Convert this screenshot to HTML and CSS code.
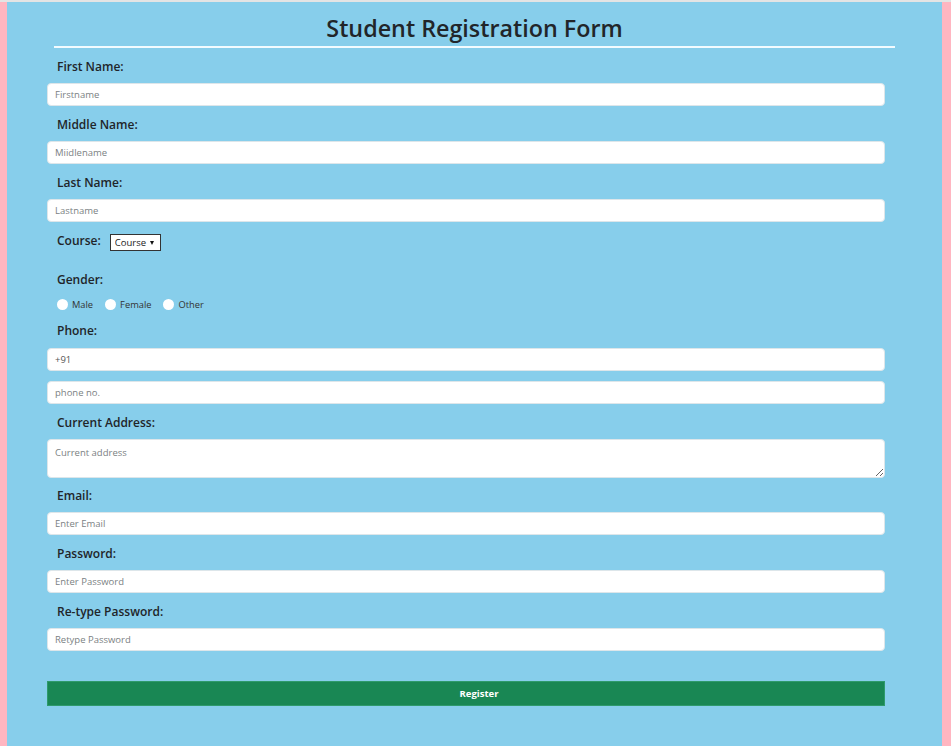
FILE: index.html
```html
<!DOCTYPE html>
<html>
<head>
<meta charset="utf-8">
<title>Student Registration Form</title>
<link rel="stylesheet" href="styles.css">
</head>
<body>
<div class="page">
  <h1 class="title">Student Registration Form</h1>
  <div class="rule"></div>
  <form class="form">
    <label class="lbl">First Name:</label>
    <input class="field" type="text" placeholder="Firstname">
    <label class="lbl">Middle Name:</label>
    <input class="field" type="text" placeholder="Miidlename">
    <label class="lbl">Last Name:</label>
    <input class="field" type="text" placeholder="Lastname">
    <div class="course-row">
      <label class="lbl inline">Course:</label>
      <span class="select-wrap">
        <select class="select"><option>Course</option></select>
        <span class="caret"></span>
      </span>
    </div>
    <label class="lbl gender">Gender:</label>
    <div class="radios">
      <label class="radio"><input type="radio" name="g"><span>Male</span></label>
      <label class="radio"><input type="radio" name="g"><span>Female</span></label>
      <label class="radio"><input type="radio" name="g"><span>Other</span></label>
    </div>
    <label class="lbl phone">Phone:</label>
    <input class="field code" type="text" value="+91">
    <input class="field next" type="text" placeholder="phone no.">
    <label class="lbl">Current Address:</label>
    <textarea class="field area" placeholder="Current address"></textarea>
    <label class="lbl">Email:</label>
    <input class="field" type="email" placeholder="Enter Email">
    <label class="lbl">Password:</label>
    <input class="field" type="password" placeholder="Enter Password">
    <label class="lbl">Re-type Password:</label>
    <input class="field" type="password" placeholder="Retype Password">
    <button class="btn" type="button">Register</button>
  </form>
</div>
</body>
</html>
```
FILE: styles.css
```css
html, body {
  margin: 0;
  padding: 0;
}
body {
  background: #ffb6c1;
  border-top: 2px solid #e4e4e4;
  font-family: "Open Sans", "Noto Sans", sans-serif;
  color: #212529;
  min-height: 744px;
  box-sizing: border-box;
}
.page {
  background: #87ceeb;
  margin: 0 9px 0 7px;
  min-height: 744px;
  padding-top: 8px;
  box-sizing: border-box;
}
.title {
  margin: 0;
  height: 36px;
  line-height: 36px;
  text-align: center;
  font-size: 23.3px;
  font-weight: 600;
  color: #212529;
}
.rule {
  height: 2px;
  background: #f2fbff;
  margin: 0 47px;
}
.form {
  display: flex;
  flex-direction: column;
  margin: 0 57px 0 40px;
  padding-top: 10px;
}
.lbl {
  display: block;
  height: 17px;
  line-height: 17px;
  font-size: 12px;
  font-weight: 600;
  margin: 0 0 8px 10px;
  color: #212529;
}
.lbl.phone {
  margin-bottom: 9px;
}
.field {
  display: block;
  box-sizing: border-box;
  width: 100%;
  height: 23px;
  border: 1px solid #dde6ea;
  border-radius: 4px;
  background: #fff;
  padding: 0 7px;
  font-family: "Open Sans", sans-serif;
  font-size: 9.5px;
  color: #555;
  margin: 0 0 10px 0;
  outline: none;
}
.field::placeholder {
  color: #7b7f83;
}
.area {
  height: 39px;
  padding: 6px 7px;
  resize: vertical;
  margin-bottom: 9px;
}
.course-row {
  display: flex;
  align-items: flex-start;
  height: 19px;
  margin-bottom: 20px;
}
.lbl.inline {
  margin: 0 0 0 10px;
}
.select-wrap {
  position: relative;
  margin-left: 9px;
  margin-top: 2px;
  display: inline-block;
}
.select {
  -webkit-appearance: none;
  appearance: none;
  box-sizing: border-box;
  width: 51px;
  height: 17px;
  border: 1px solid #333;
  border-radius: 0;
  background: #fff;
  font-family: "Open Sans", sans-serif;
  font-size: 9.5px;
  color: #222;
  padding: 0 0 0 4px;
  line-height: 15px;
  display: block;
}
.caret {
  position: absolute;
  right: 7px;
  top: 7px;
  width: 0;
  height: 0;
  border-left: 2.5px solid transparent;
  border-right: 2.5px solid transparent;
  border-top: 4px solid #111;
  pointer-events: none;
}
.lbl.gender {
  margin-bottom: 10px;
}
.radios {
  display: flex;
  align-items: center;
  height: 12px;
  margin: 0 0 12px 10px;
  gap: 12px;
}
.radio {
  display: flex;
  align-items: center;
  gap: 4px;
  font-size: 9.3px;
  color: #333;
}
.radio input {
  -webkit-appearance: none;
  appearance: none;
  width: 11px;
  height: 11px;
  border-radius: 50%;
  background: #fff;
  border: none;
  margin: 0;
}
.btn {
  margin-top: 20px;
  height: 25px;
  width: 100%;
  background: #198754;
  border: 1px solid #2e9a6b;
  color: #fff;
  font-family: "Open Sans", sans-serif;
  font-size: 9.5px;
  font-weight: 700;
  padding: 0 0 0 26px;
  cursor: pointer;
}
```
